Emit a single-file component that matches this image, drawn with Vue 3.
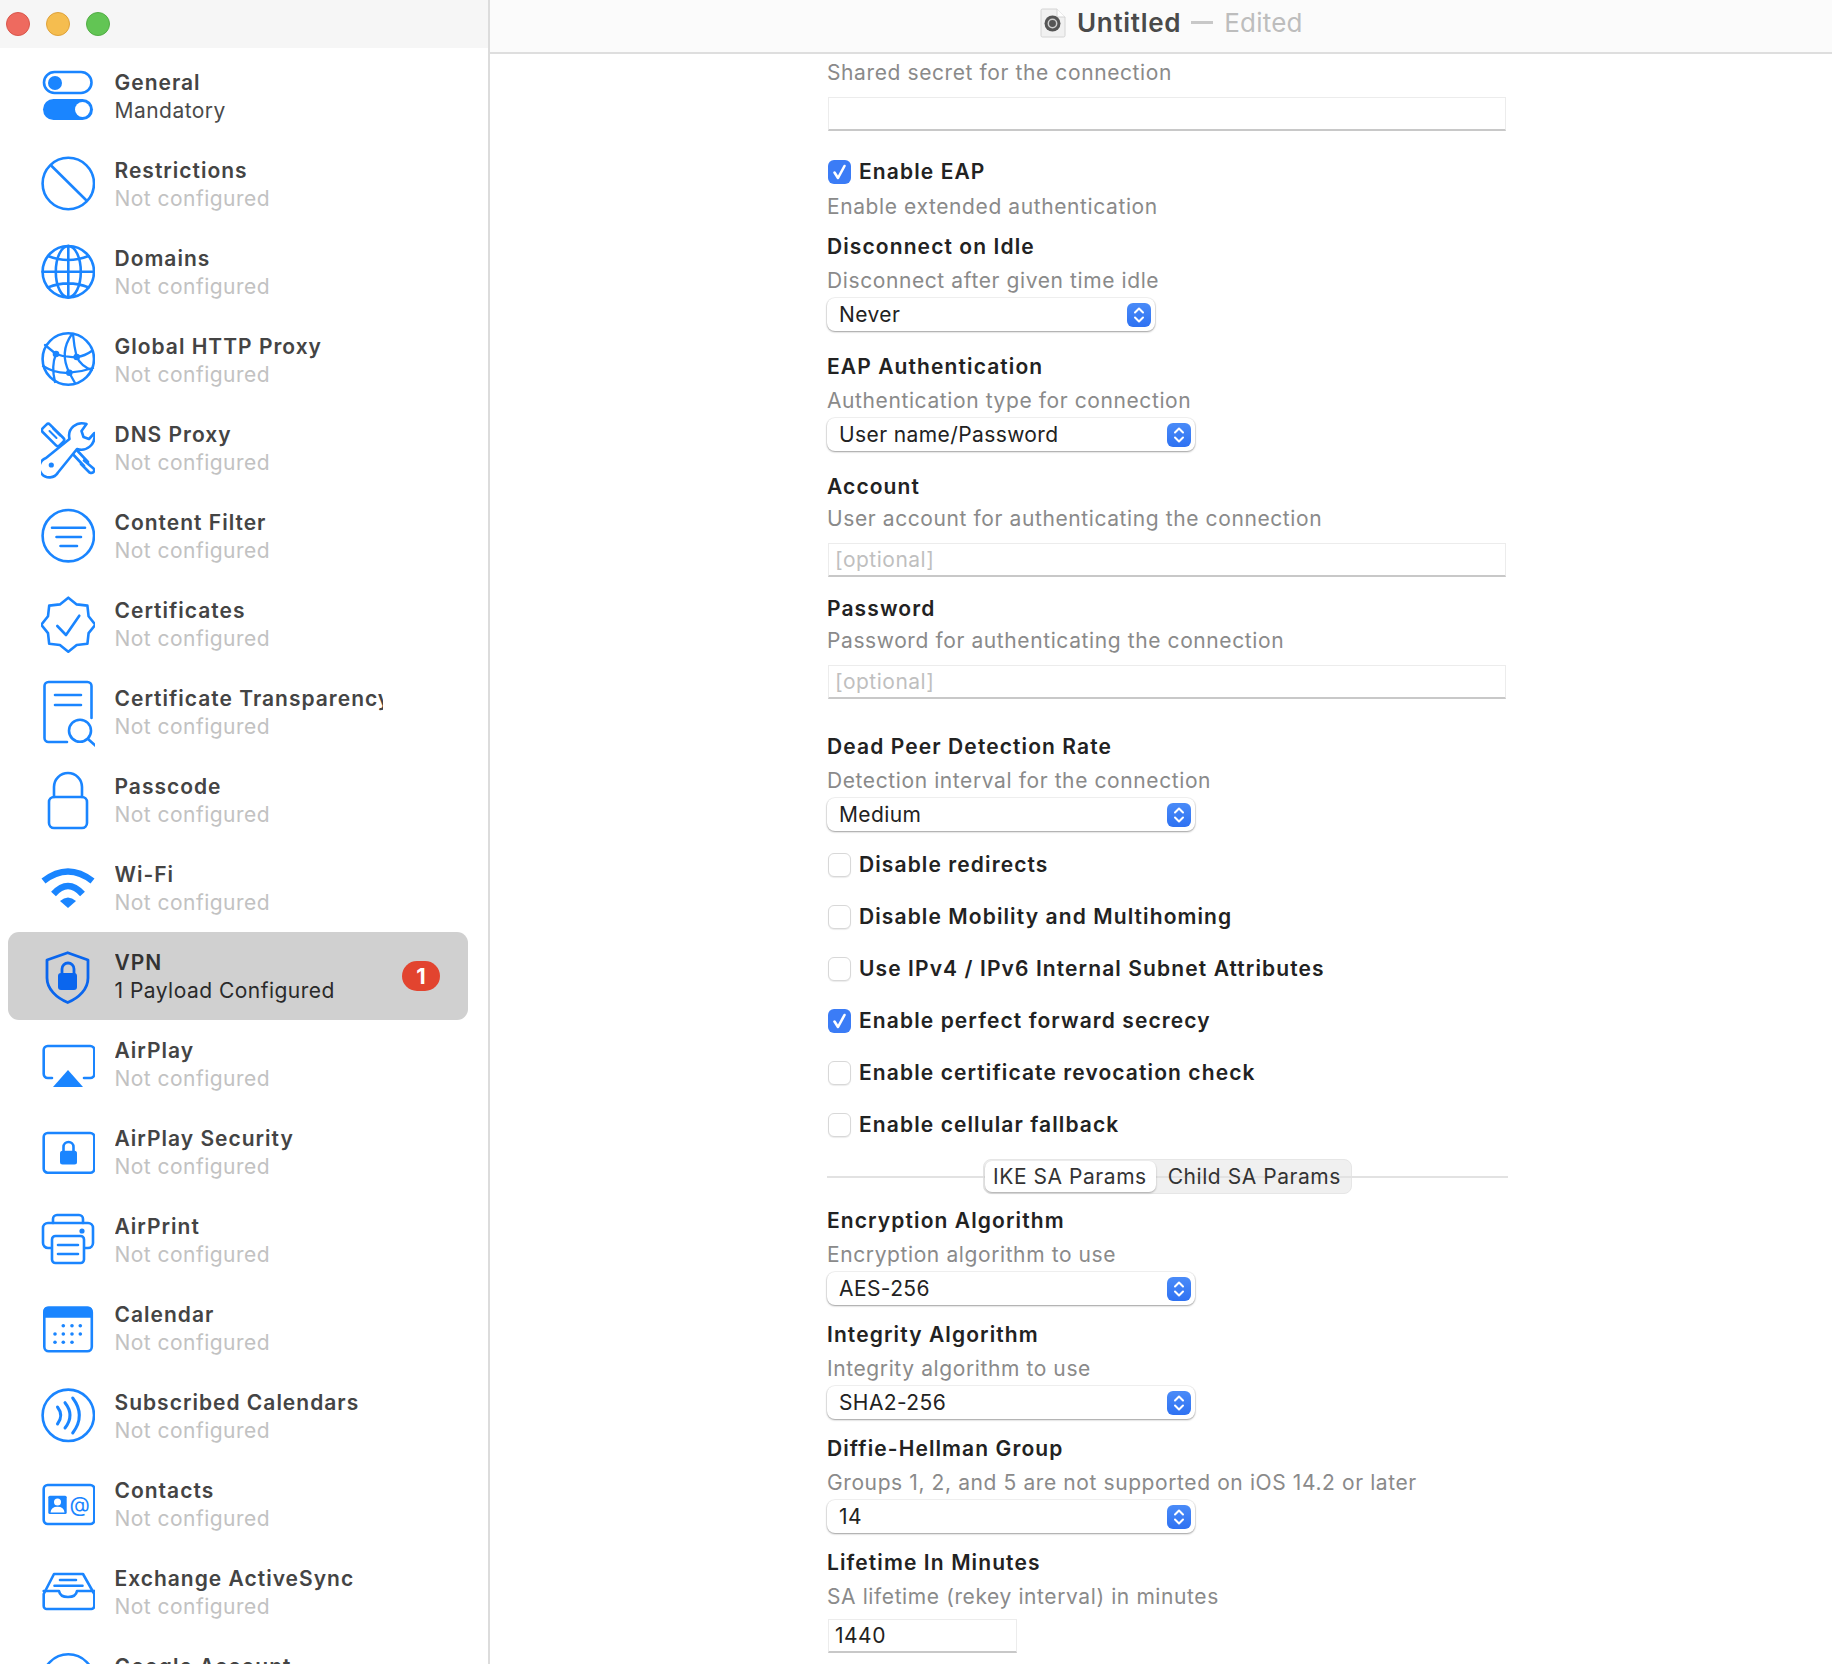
<script setup>
const rows = [
  { id: 'general', title: 'General', sub: 'Mandatory', state: 'set' },
  { id: 'restrictions', title: 'Restrictions', sub: 'Not configured' },
  { id: 'domains', title: 'Domains', sub: 'Not configured' },
  { id: 'proxy', title: 'Global HTTP Proxy', sub: 'Not configured' },
  { id: 'dns', title: 'DNS Proxy', sub: 'Not configured' },
  { id: 'filter', title: 'Content Filter', sub: 'Not configured' },
  { id: 'cert', title: 'Certificates', sub: 'Not configured' },
  { id: 'transparency', title: 'Certificate Transparency', sub: 'Not configured' },
  { id: 'passcode', title: 'Passcode', sub: 'Not configured' },
  { id: 'wifi', title: 'Wi-Fi', sub: 'Not configured' },
  { id: 'vpn', title: 'VPN', sub: '1 Payload Configured', state: 'active', badge: 1 },
  { id: 'airplay', title: 'AirPlay', sub: 'Not configured' },
  { id: 'airsec', title: 'AirPlay Security', sub: 'Not configured' },
  { id: 'airprint', title: 'AirPrint', sub: 'Not configured' },
  { id: 'calendar', title: 'Calendar', sub: 'Not configured' },
  { id: 'subscribed', title: 'Subscribed Calendars', sub: 'Not configured' },
  { id: 'contacts', title: 'Contacts', sub: 'Not configured' },
  { id: 'exchange', title: 'Exchange ActiveSync', sub: 'Not configured' },
  { id: 'google', title: 'Google Account', sub: 'Not configured' },
]
const calDots = [
  [22.3, 41.7], [31, 41.7], [39.3, 41.7],
  [14, 50], [22.3, 50], [31, 50], [39.3, 50],
  [14, 58.3], [22.3, 58.3], [31, 58.3],
]
const checks = [
  { text: 'Disable redirects', on: false },
  { text: 'Disable Mobility and Multihoming', on: false },
  { text: 'Use IPv4 / IPv6 Internal Subnet Attributes', on: false },
  { text: 'Enable perfect forward secrecy', on: true },
  { text: 'Enable certificate revocation check', on: false },
  { text: 'Enable cellular fallback', on: false },
]
</script>

<template>
  <div class="window">
    <aside class="sidebar">
      <div class="traffic">
        <span class="light red"></span>
        <span class="light yellow"></span>
        <span class="light green"></span>
      </div>
      <ul class="list">
        <li v-for="r in rows" :key="r.id" class="row" :class="r.state">
          <svg class="ico" viewBox="0 0 54 88" width="54" height="88">
            <template v-if="r.id === 'general'">
              <rect x="3" y="20" width="47.5" height="21" rx="10.5" />
              <circle class="f" cx="14" cy="31" r="7" />
              <rect class="f" x="2" y="47" width="50" height="21" rx="10.5" />
              <circle class="w" cx="41.5" cy="57.5" r="7.5" />
            </template>
            <template v-else-if="r.id === 'restrictions'">
              <circle cx="27.3" cy="43.5" r="25.7" />
              <path d="M10.6 26 45 60" />
            </template>
            <template v-else-if="r.id === 'domains'">
              <circle cx="27.3" cy="43.7" r="25.7" />
              <ellipse cx="27.3" cy="43.7" rx="12.5" ry="25.7" />
              <path d="M27.3 18V69.4M1.6 43.7H53M7 28q20 8 40.6 0M7 59.4q20-8 40.6 0" />
            </template>
            <template v-else-if="r.id === 'proxy'">
              <circle cx="27.3" cy="43" r="25.7" />
              <path class="thin" d="M31 18Q18 36 28.3 56.7L34 67M32 18Q33 30 35.7 41Q40 50 50.7 54M4 29 15 38Q25 42 35.7 41Q44 40 50.7 35M2 50Q15 58 28.3 56.7Q40 56 52 52M15 38Q10 50 14 66" />
              <circle class="f" cx="15" cy="38" r="3.3" />
              <circle class="f" cx="35.7" cy="41" r="3.3" />
              <circle class="f" cx="28.3" cy="56.7" r="3.3" />
            </template>
            <template v-else-if="r.id === 'dns'">
              <rect x="0" y="25.8" width="24" height="10.4" rx="2.5" transform="rotate(45 12 31)" />
              <path d="M8.5 27 15.5 34M12 24.5 19 31.5" stroke-width="2" />
              <path d="M31 41 47 58M27 45 43 62M43 56.5 52.5 64.5Q54 66.500 52.500 68T48.500 68.500L40 60" />
              <path class="wf" d="M45.500 20C36 17 26 24 28.500 35L5 54A10 10 0 1 0 17 68.500L36 45C45 48 55 41 53.500 29L48 35 42.500 33 40.500 27Z" />
              <circle class="f" cx="10.300" cy="61" r="2.600" />
            </template>
            <template v-else-if="r.id === 'filter'">
              <circle cx="27.300" cy="43.700" r="25.700" />
              <path d="M11 35.700H44M15.500 45H40M19.500 54H36" />
            </template>
            <template v-else-if="r.id === 'cert'">
              <path d="M27.300 17.700 35.700 24.400 46.400 25.600 47.600 36.300 54.300 44.700 47.600 53.100 46.400 63.800 35.700 65 27.300 71.700 18.900 65 8.200 63.800 7 53.100.3 44.700 7 36.300 8.200 25.600 18.900 24.400Z" />
              <path d="M16.300 46 25 55 38.300 35.700" />
            </template>
            <template v-else-if="r.id === 'transparency'">
              <path d="M50.500 50V18a4 4 0 0 0-4-4H7.500a4 4 0 0 0-4 4V70a4 4 0 0 0 4 4H26" />
              <path d="M14 27H40M14 37H40" />
              <circle cx="39" cy="62.700" r="11" />
              <path d="M47 71 55.500 78.700" />
            </template>
            <template v-else-if="r.id === 'passcode'">
              <rect x="8" y="41" width="38" height="31" rx="5" />
              <path d="M13 41V31a14 14 0 0 1 28 0V41" />
            </template>
            <template v-else-if="r.id === 'wifi'">
              <path class="thick" d="M2.500 37Q27 18 51.500 37M12.500 50Q27 34 41.500 50" />
              <path class="f" d="M19 57Q27 50 35 57L27 64Z" />
            </template>
            <template v-else-if="r.id === 'vpn'">
              <path d="M26.700 20.700 47 28V46C47 57 38 66 26.700 70.500 15.500 66 6 57 6 46V28Z" stroke-width="2.800" />
              <path class="dk" d="M21 42V37a6 6 0 0 1 12 0V42" />
              <rect class="dkf" x="17" y="41" width="19" height="17" rx="3" />
            </template>
            <template v-else-if="r.id === 'airplay'">
              <path d="M11 58H6.700a4 4 0 0 1-4-4V30a4 4 0 0 1 4-4H49.300a4 4 0 0 1 4 4V54a4 4 0 0 1-4 4H43" />
              <path class="f" d="M27 50 42 67H12Z" />
            </template>
            <template v-else-if="r.id === 'airsec'">
              <rect x="2.700" y="25" width="50.600" height="39.700" rx="4" />
              <path d="M22.500 43V39a5 5 0 0 1 10 0V43" />
              <rect class="f" x="19" y="42.700" width="17" height="13.800" rx="2.500" />
            </template>
            <template v-else-if="r.id === 'airprint'">
              <path d="M10 52H7a5 5 0 0 1-5-5V32a5 5 0 0 1 5-5H47a5 5 0 0 1 5 5V47a5 5 0 0 1-5 5H44" />
              <path d="M12 27V23a4 4 0 0 1 4-4H38a4 4 0 0 1 4 4V27" />
              <rect x="11" y="40" width="32" height="27" rx="3.500" />
              <path d="M17 49H37M17 58H37" />
              <circle class="f" cx="41" cy="35" r="2.600" />
            </template>
            <template v-else-if="r.id === 'calendar'">
              <rect x="3.300" y="23.700" width="47.500" height="43.600" rx="4.500" />
              <path class="f" d="M2.300 33.700V27a4.500 4.500 0 0 1 4.500-4.500H47a4.500 4.500 0 0 1 4.500 4.500V33.700Z" />
              <circle v-for="d in calDots" :key="d.join()" class="f" :cx="d[0]" :cy="d[1]" r="1.800" />
            </template>
            <template v-else-if="r.id === 'subscribed'">
              <circle cx="27.300" cy="43.300" r="25.700" />
              <path d="M16.500 35Q23 43.500 16.500 52M24 30.700Q34 43.300 24 56M31.700 26Q45 43.300 31.700 61" stroke-width="3" />
            </template>
            <template v-else-if="r.id === 'contacts'">
              <rect x="2.700" y="25" width="50.600" height="39" rx="4" />
              <rect class="f" x="7.300" y="35.700" width="18.400" height="18.300" rx="1.500" />
              <circle class="w" cx="16.500" cy="42" r="3.500" />
              <path class="w" d="M9.500 52.500Q10 46.800 16.500 46.800T23.500 52.500Z" />
              <text class="at" x="28.500" y="51.500">@</text>
            </template>
            <template v-else-if="r.id === 'exchange'">
              <path d="M2.700 46 13 26H42L53.300 46V58a3 3 0 0 1-3 3H5.700a3 3 0 0 1-3-3Z" />
              <path d="M2.700 43H18Q19 49 27 49T36 43H53.300M19 32H35M13.500 37.700H41.500" />
            </template>
            <template v-else>
              <circle cx="27.300" cy="44" r="25.700" />
            </template>
          </svg>
          <div class="texts">
            <div class="title">{{ r.title }}</div>
            <div class="sub">{{ r.sub }}</div>
          </div>
          <span v-if="r.badge" class="badge">{{ r.badge }}</span>
        </li>
      </ul>
    </aside>

    <main class="main">
      <header class="titlebar">
        <svg class="doc" viewBox="0 0 26 30" width="26" height="30">
          <path d="M1 2.500A1.500 1.500 0 0 1 2.500 1H17L25 9V27.500A1.500 1.500 0 0 1 23.500 29H2.500A1.500 1.500 0 0 1 1 27.500Z" fill="#f1f1f1" stroke="#d4d4d4" />
          <path d="M17 1V9H25" fill="#fff" stroke="#d4d4d4" />
          <circle cx="12.500" cy="15.500" r="8" fill="#555" />
          <circle cx="12.500" cy="15.500" r="4.200" fill="none" stroke="#cfcfcf" stroke-width="1.500" />
        </svg>
        <span class="doc-name">Untitled</span>
        <span class="doc-dash"></span>
        <span class="doc-state">Edited</span>
      </header>

      <form class="form">
        <div class="desc">Shared secret for the connection</div>
        <div class="input mt-7"></div>

        <label class="check mt-24"><span class="box on"><svg viewBox="0 0 23 24" width="23" height="24"><path d="M6.500 12.500 10 18 16.500 6" /></svg></span><span class="label">Enable EAP</span></label>
        <div class="desc mt-1">Enable extended authentication</div>

        <div class="label mt-6">Disconnect on Idle</div>
        <div class="desc">Disconnect after given time idle</div>
        <div class="select short">
          <span>Never</span>
          <span class="stepper"><svg viewBox="0 0 24 24" width="24" height="24"><path d="M8 9.500 12 5.500 16 9.500M8 14.500 12 18.500 16 14.500" /></svg></span>
        </div>

        <div class="label mt-19">EAP Authentication</div>
        <div class="desc">Authentication type for connection</div>
        <div class="select">
          <span>User name/Password</span>
          <span class="stepper"><svg viewBox="0 0 24 24" width="24" height="24"><path d="M8 9.500 12 5.500 16 9.500M8 14.500 12 18.500 16 14.500" /></svg></span>
        </div>

        <div class="label mt-19">Account</div>
        <div class="desc mt-n2">User account for authenticating the connection</div>
        <div class="input placeholder mt-7">[optional]</div>

        <div class="label mt-15">Password</div>
        <div class="desc mt-n2">Password for authenticating the connection</div>
        <div class="input placeholder mt-7">[optional]</div>

        <div class="label mt-31">Dead Peer Detection Rate</div>
        <div class="desc">Detection interval for the connection</div>
        <div class="select">
          <span>Medium</span>
          <span class="stepper"><svg viewBox="0 0 24 24" width="24" height="24"><path d="M8 9.500 12 5.500 16 9.500M8 14.500 12 18.500 16 14.500" /></svg></span>
        </div>

        <div class="checks">
          <label v-for="c in checks" :key="c.text" class="check">
            <span class="box" :class="{ on: c.on }"><svg v-if="c.on" viewBox="0 0 23 24" width="23" height="24"><path d="M6.500 12.500 10 18 16.500 6" /></svg></span>
            <span class="label">{{ c.text }}</span>
          </label>
        </div>

        <div class="tabrow">
          <div class="tabs">
            <span class="tab active">IKE SA Params</span>
            <span class="tab">Child SA Params</span>
          </div>
        </div>

        <div class="label mt-10">Encryption Algorithm</div>
        <div class="desc">Encryption algorithm to use</div>
        <div class="select">
          <span>AES-256</span>
          <span class="stepper"><svg viewBox="0 0 24 24" width="24" height="24"><path d="M8 9.500 12 5.500 16 9.500M8 14.500 12 18.500 16 14.500" /></svg></span>
        </div>

        <div class="label mt-13">Integrity Algorithm</div>
        <div class="desc">Integrity algorithm to use</div>
        <div class="select">
          <span>SHA2-256</span>
          <span class="stepper"><svg viewBox="0 0 24 24" width="24" height="24"><path d="M8 9.500 12 5.500 16 9.500M8 14.500 12 18.500 16 14.500" /></svg></span>
        </div>

        <div class="label mt-13">Diffie-Hellman Group</div>
        <div class="desc">Groups 1, 2, and 5 are not supported on iOS 14.2 or later</div>
        <div class="select">
          <span>14</span>
          <span class="stepper"><svg viewBox="0 0 24 24" width="24" height="24"><path d="M8 9.500 12 5.500 16 9.500M8 14.500 12 18.500 16 14.500" /></svg></span>
        </div>

        <div class="label mt-13">Lifetime In Minutes</div>
        <div class="desc">SA lifetime (rekey interval) in minutes</div>
        <div class="input value mt-5">1440</div>
      </form>
    </main>
  </div>
</template>

<style>
html, body { margin: 0; background: #fff; }
</style>

<style scoped>
.window {
  display: flex;
  width: 1832px;
  height: 1664px;
  overflow: hidden;
  background: #fff;
  font-family: Inter, "Liberation Sans", sans-serif;
}
.sidebar {
  width: 488px;
  flex: none;
  border-right: 2px solid #dcdcdc;
  overflow: hidden;
}
.traffic {
  height: 48px;
  display: flex;
  align-items: center;
  gap: 16px;
  padding-left: 6px;
  background: #f6f6f6;
}
.light { width: 24px; height: 24px; border-radius: 50%; box-sizing: border-box; }
.red { background: #ee6a5f; border: 1px solid #d9564b; }
.yellow { background: #f5bd4f; border: 1px solid #dfa23a; }
.green { background: #62c554; border: 1px solid #52ad45; }
.list { list-style: none; margin: 4px 0 0; padding: 0; }
.row {
  height: 88px;
  margin: 0 20px 0 8px;
  padding-left: 33px;
  display: flex;
  align-items: center;
  border-radius: 11px;
}
.row.active { background: #d0d0d0; }
.ico {
  flex: none;
  fill: none;
  stroke: #1a85ff;
  stroke-width: 2.6;
  stroke-linecap: round;
  stroke-linejoin: round;
}
.ico .f { fill: #1a85ff; stroke: none; }
.ico .w { fill: #fff; stroke: none; }
.ico .wf { fill: #fff; }
.ico .thin { stroke-width: 2.3; }
.ico .thick { stroke-width: 6.5; stroke-linecap: butt; }
.ico .dk { stroke: #0a66ee; stroke-width: 2.8; }
.ico .dkf { fill: #0a66ee; stroke: none; }
.row.active .ico { stroke: #0a66ee; }
.ico .at {
  fill: #1a85ff;
  stroke: none;
  font-family: Inter, sans-serif;
  font-size: 21px;
}
.texts {
  margin-left: 19.5px;
  padding-top: 2px;
  width: 268px;
  flex: none;
  overflow: hidden;
  white-space: nowrap;
}
.title, .sub { line-height: 28px; font-size: 21px; }
.title { font-weight: 600; color: #444; letter-spacing: 1px; }
.sub { color: #c2c2c2; letter-spacing: 0.47px; }
.row.set .sub { color: #4a4a4a; }
.row.active .title { color: #333; }
.row.active .sub { color: #2a2a2a; }
.badge {
  margin-left: auto;
  margin-right: 28px;
  width: 38px;
  height: 30px;
  border-radius: 15px;
  background: #e2442f;
  color: #fff;
  font-size: 22px;
  font-weight: 700;
  line-height: 30px;
  text-align: center;
}
.main { flex: 1; min-width: 0; }
.titlebar {
  height: 45px;
  padding-bottom: 7px;
  display: flex;
  align-items: center;
  padding-left: 550px;
  background: #fbfbfb;
  border-bottom: 2px solid #dedede;
}
.doc { flex: none; }
.doc-name { margin-left: 11px; font-size: 26px; font-weight: 600; color: #4a4a4a; letter-spacing: 0.7px; }
.doc-dash { margin-left: 10px; width: 22px; height: 3px; background: #c8c8c8; }
.doc-state { margin-left: 11px; font-size: 26px; color: #bdbdbd; letter-spacing: 0.2px; }
.form {
  display: flex;
  flex-direction: column;
  align-items: flex-start;
  padding: 2px 0 0 337px;
  width: 680px;
}
.desc, .label {
  line-height: 34px;
  height: 34px;
  font-size: 21px;
  white-space: nowrap;
}
.desc { color: #8a8a8a; letter-spacing: 0.6px; }
.label { font-weight: 600; color: #222; letter-spacing: 1.1px; }
.input {
  width: 678px;
  height: 34px;
  margin-left: 1px;
  box-sizing: border-box;
  background: #fff;
  border: 1px solid #ececec;
  border-bottom: 2px solid #c8c8c8;
  padding-left: 6px;
  font-size: 21px;
  line-height: 32px;
  letter-spacing: 0.5px;
}
.placeholder { color: #bfbfbf; }
.value { width: 189px; color: #222; }
.select {
  width: 368px;
  height: 33px;
  box-sizing: border-box;
  display: flex;
  align-items: center;
  justify-content: space-between;
  padding: 0 4px 0 12px;
  border-radius: 8px;
  background: #fff;
  box-shadow: 0 0 0 1px rgba(0, 0, 0, 0.05), 0 1px 2px rgba(0, 0, 0, 0.35);
  font-size: 21px;
  letter-spacing: 0.4px;
  color: #222;
}
.select.short { width: 328px; }
.stepper {
  width: 24px;
  height: 24px;
  border-radius: 6px;
  background: linear-gradient(#4a8bf8, #2f72f2);
  display: flex;
}
.stepper svg { fill: none; stroke: #fff; stroke-width: 2; stroke-linecap: round; stroke-linejoin: round; }
.check {
  display: flex;
  align-items: center;
  gap: 8px;
  height: 34px;
}
.box {
  width: 23px;
  height: 24px;
  margin-left: 1px;
  box-sizing: border-box;
  border-radius: 6px;
  background: #fff;
  border: 1px solid #d8d8d8;
  box-shadow: 0 1px 1px rgba(0, 0, 0, 0.08);
  display: flex;
}
.box.on { background: #3b7cf6; border: 0; box-shadow: none; }
.box svg { fill: none; stroke: #fff; stroke-width: 2.6; stroke-linecap: round; stroke-linejoin: round; }
.checks {
  display: flex;
  flex-direction: column;
  gap: 18px;
  margin-top: 17px;
}
.tabrow {
  position: relative;
  width: 681px;
  margin-top: 17px;
  display: flex;
  justify-content: center;
}
.tabrow::before {
  content: "";
  position: absolute;
  left: 0;
  right: 0;
  top: 17px;
  height: 2px;
  background: #e2e2e2;
  z-index: 1;
}
.tabs {
  display: flex;
  height: 35px;
  box-sizing: border-box;
  padding: 1px;
  border-radius: 8px;
  background: #f0f0f0;
  border: 1px solid #e6e6e6;
  font-size: 21px;
  letter-spacing: 0.55px;
  color: #333;
}
.tab { position: relative; z-index: 2; padding: 0 9px 0 12px; line-height: 31px; white-space: nowrap; }
.tab.active {
  padding: 0 9px 0 8px;
  background: #fff;
  border-radius: 7px;
  box-shadow: 0 1px 2px rgba(0, 0, 0, 0.3);
}
.mt-1 { margin-top: 1px; }
.mt-n2 { margin-top: -2px; }
.mt-5 { margin-top: 5px; }
.mt-6 { margin-top: 6px; }
.mt-7 { margin-top: 7px; }
.mt-10 { margin-top: 10px; }
.mt-13 { margin-top: 13px; }
.mt-15 { margin-top: 15px; }
.mt-19 { margin-top: 19px; }
.mt-24 { margin-top: 24px; }
.mt-31 { margin-top: 31px; }
</style>
